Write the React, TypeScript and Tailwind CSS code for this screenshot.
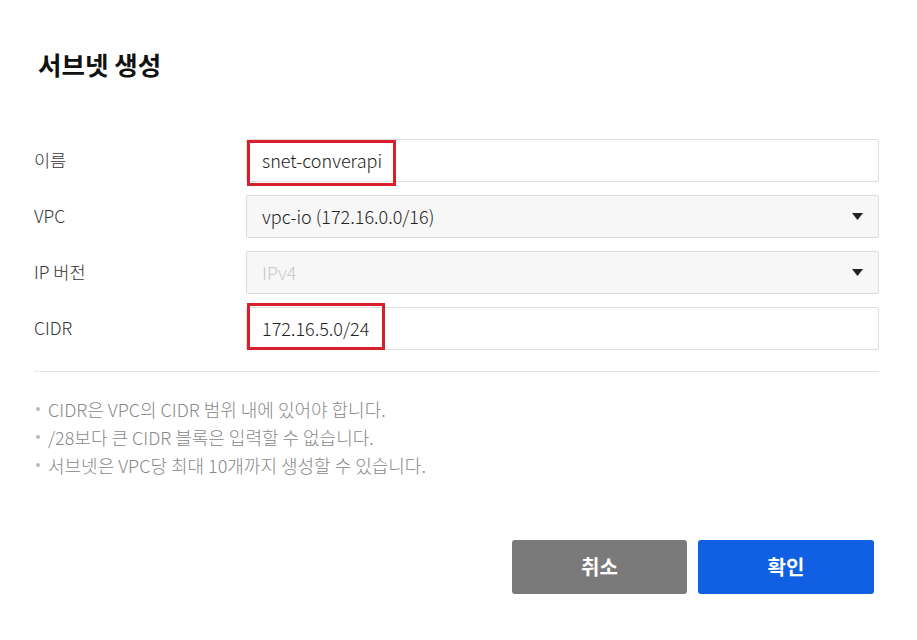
import React from "react";

const font = { fontFamily: '"Noto Sans CJK KR", "Noto Sans", sans-serif' };

function Arrow() {
  return (
    <svg width="11" height="7" viewBox="0 0 11 7" className="shrink-0">
      <path d="M0 0 L11 0 L5.5 7 Z" fill="#222" />
    </svg>
  );
}

export default function App() {
  return (
    <div className="w-[917px] h-[640px] bg-white text-[#333] relative font-light" style={font}>
      <h1 className="pl-[38px] pt-[47px] text-[25.5px] leading-[34px] font-bold text-[#111]">서브넷 생성</h1>

      <div className="mt-[58px] pl-[34px] pr-[38px] flex flex-col gap-[13px]">
        <div className="flex items-center">
          <div className="w-[212px] text-[17.5px]">이름</div>
          <div className="flex-1 h-[43px] border border-[#dddddd] rounded-[2px] flex items-center pl-[15px] text-[18px] text-[#222]">
            snet-converapi
          </div>
        </div>
        <div className="flex items-center">
          <div className="w-[212px] text-[17.5px]">VPC</div>
          <div className="flex-1 h-[43px] border border-[#dddddd] rounded-[2px] bg-[#f7f7f7] flex items-center justify-between pl-[15px] pr-[15px] text-[18px] text-[#222]">
            <span>vpc-io (172.16.0.0/16)</span>
            <Arrow />
          </div>
        </div>
        <div className="flex items-center">
          <div className="w-[212px] text-[17.5px]">IP 버전</div>
          <div className="flex-1 h-[43px] border border-[#dddddd] rounded-[2px] bg-[#f7f7f7] flex items-center justify-between pl-[15px] pr-[15px] text-[18px]">
            <span className="text-[#c8c8c8]">IPv4</span>
            <Arrow />
          </div>
        </div>
        <div className="flex items-center">
          <div className="w-[212px] text-[17.5px]">CIDR</div>
          <div className="flex-1 h-[43px] border border-[#dddddd] rounded-[2px] flex items-center pl-[15px] text-[18px] text-[#222]">
            172.16.5.0/24
          </div>
        </div>
      </div>

      <div className="ml-[34px] mr-[38px] mt-[21px] border-t border-[#e5e5e5]" />

      <ul className="mt-[23px] pl-[34px] text-[18px] leading-[28px] text-[#888888]">
        <li className="flex items-center gap-[8px]"><span className="w-[4px] h-[4px] rounded-full bg-[#bbbbbb] ml-[2px]" />CIDR은 VPC의 CIDR 범위 내에 있어야 합니다.</li>
        <li className="flex items-center gap-[8px]"><span className="w-[4px] h-[4px] rounded-full bg-[#bbbbbb] ml-[2px]" />/28보다 큰 CIDR 블록은 입력할 수 없습니다.</li>
        <li className="flex items-center gap-[8px]"><span className="w-[4px] h-[4px] rounded-full bg-[#bbbbbb] ml-[2px]" />서브넷은 VPC당 최대 10개까지 생성할 수 있습니다.</li>
      </ul>

      <div className="mt-[61px] flex justify-end gap-[11px] pr-[43px]">
        <button className="w-[175px] h-[54px] rounded-[3px] bg-[#7a7a7a] text-white text-[20px] font-bold">취소</button>
        <button className="w-[176px] h-[54px] rounded-[3px] bg-[#1160e3] text-white text-[20px] font-bold">확인</button>
      </div>

      <div className="absolute left-[247px] top-[140px] w-[149px] h-[46px] border-[3px] border-[#d8202c]" />
      <div className="absolute left-[247px] top-[303px] w-[138px] h-[47px] border-[3px] border-[#d8202c]" />
    </div>
  );
}
